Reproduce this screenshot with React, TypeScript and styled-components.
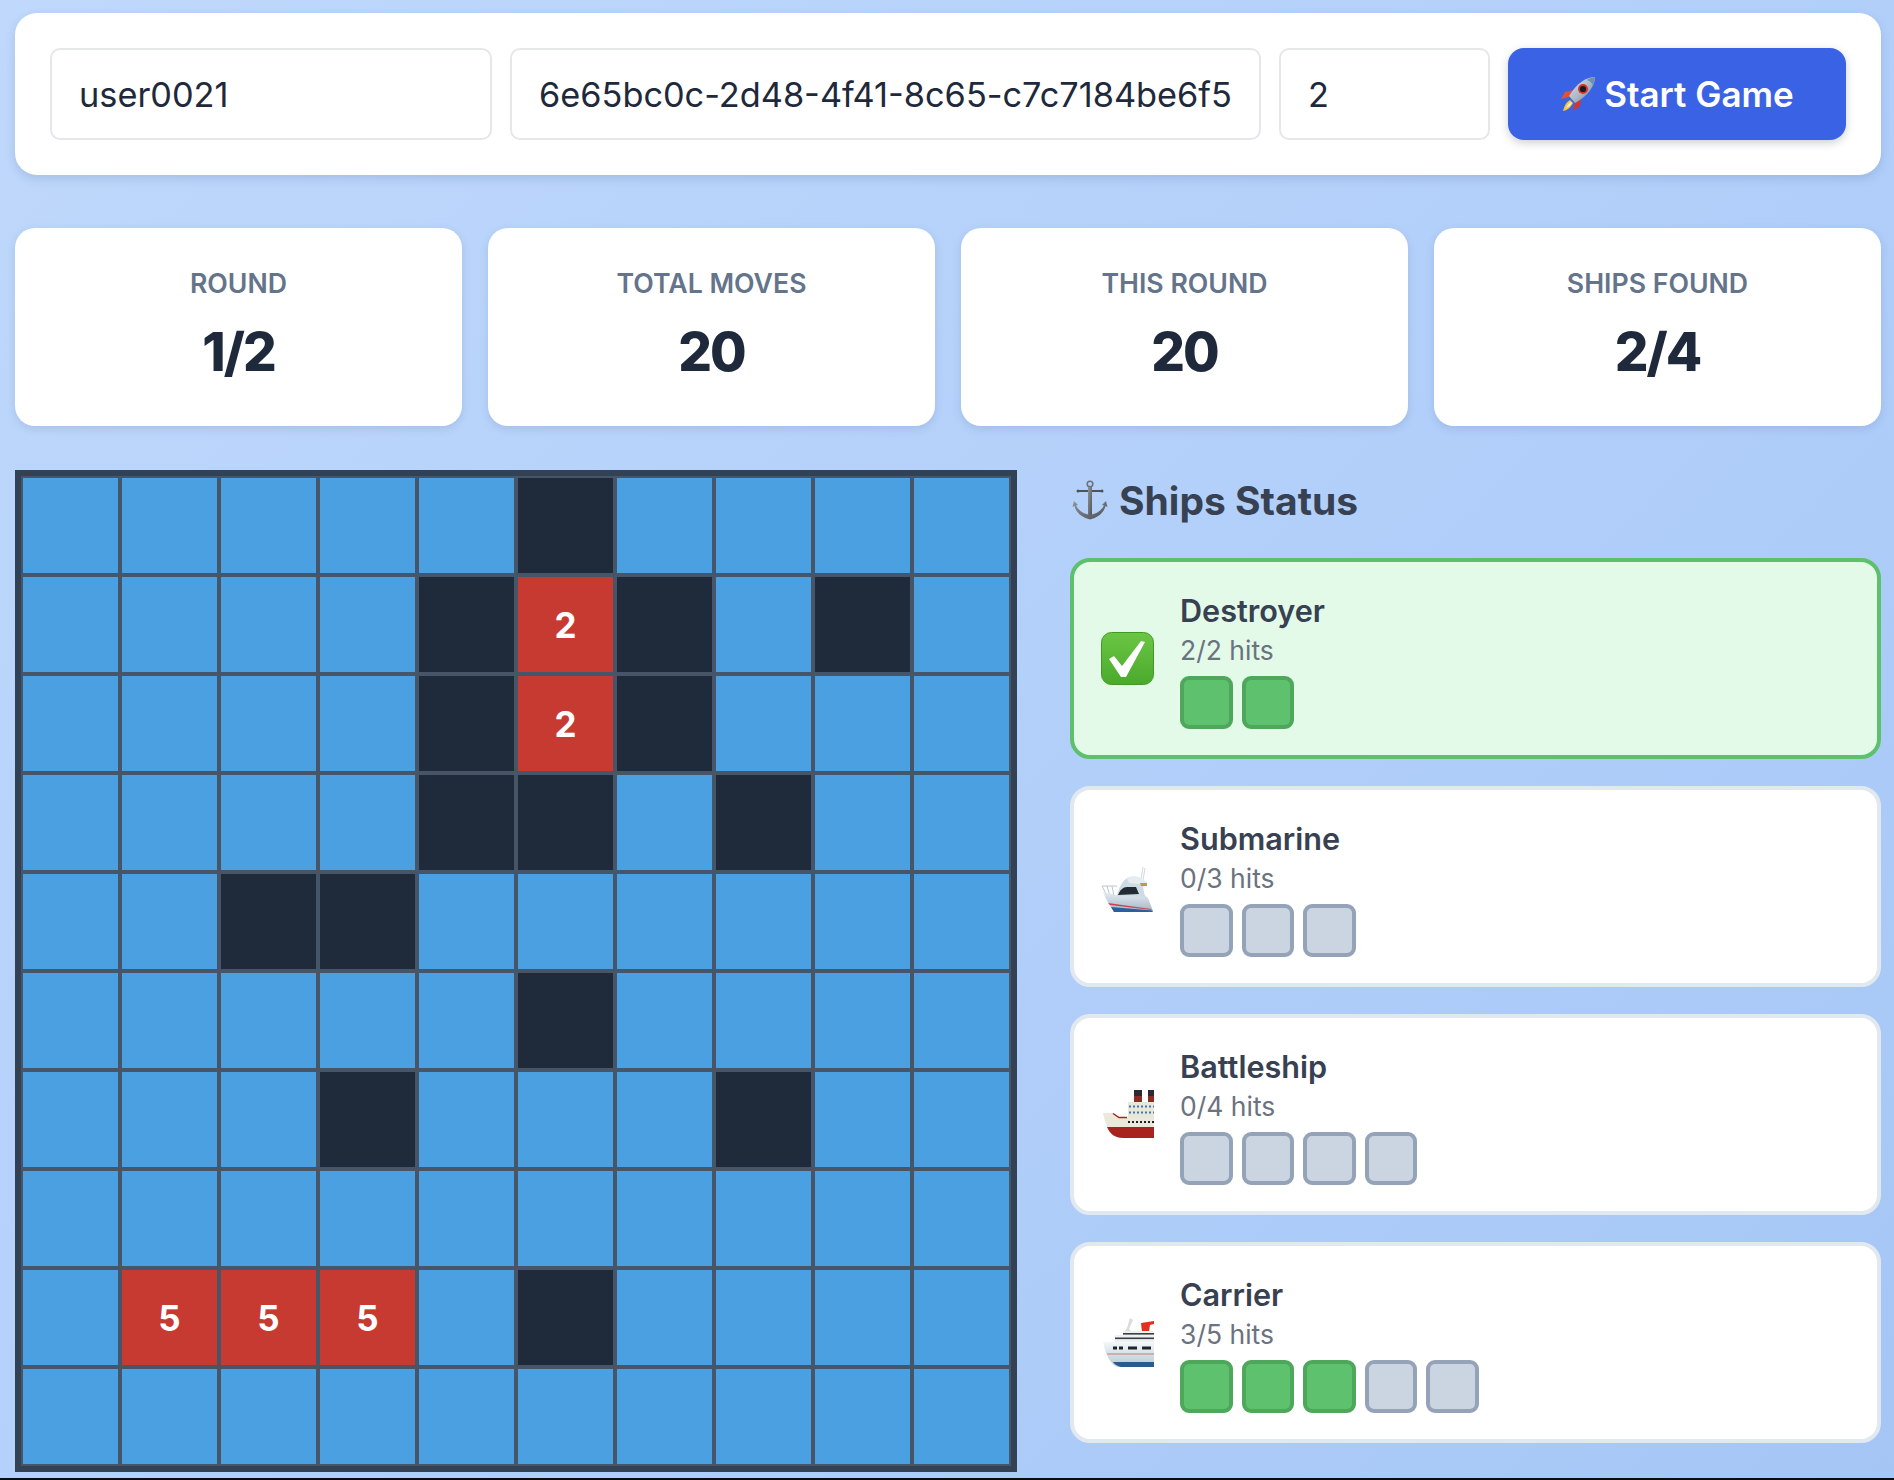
import React from "react";
import styled, { createGlobalStyle } from "styled-components";

const Global = createGlobalStyle`
  html, body { margin: 0; padding: 0; height: 1480px; overflow: hidden; background: #0b0b14; }
  #root { height: 1480px; }
  * { box-sizing: border-box; }
  body { font-family: Inter, "Liberation Sans", sans-serif; }
`;

const Page = styled.div`
  height: 1478px;
  padding: 13px 13px 0 15px;
  display: flex;
  flex-direction: column;
  gap: 53px;
  background: linear-gradient(135deg, #bfd8fb 0%, #b3d0fa 50%, #a5c6f5 100%);
`;

const ControlCard = styled.div`
  height: 162px;
  padding: 35px 35px;
  display: flex;
  gap: 18px;
  background: #fff;
  border-radius: 22px;
  box-shadow: 0 4px 10px rgba(60, 90, 140, 0.18);
`;

const Field = styled.div<{ $w: number }>`
  width: ${(p) => p.$w}px;
  flex: none;
  height: 92px;
  padding: 0 27px;
  display: flex;
  align-items: center;
  border: 2px solid #e5e7eb;
  border-radius: 10px;
  font-size: 34.3px;
  color: #1e293b;
  white-space: nowrap;
`;

const StartButton = styled.div`
  width: 338px;
  flex: none;
  height: 92px;
  display: flex;
  align-items: center;
  justify-content: center;
  gap: 8px;
  background: #3a62e4;
  border-radius: 16px;
  color: #fff;
  font-size: 35px;
  font-weight: 600;
  box-shadow: 0 3px 8px rgba(30, 41, 59, 0.22);
`;

const StatsRow = styled.div`
  display: grid;
  grid-template-columns: repeat(4, 447px);
  gap: 26px;
`;

const StatCard = styled.div`
  height: 198px;
  display: flex;
  flex-direction: column;
  align-items: center;
  background: #fff;
  border-radius: 20px;
  padding-top: 39px;
  box-shadow: 0 3px 8px rgba(60, 90, 140, 0.16);
`;

const StatLabel = styled.div`
  font-size: 26.7px;
  line-height: 32px;
  font-weight: 600;
  color: #64748b;
`;

const StatValue = styled.div`
  margin-top: 20px;
  font-size: 53px;
  line-height: 66px;
  font-weight: 800;
  letter-spacing: -2px;
  color: #1e293b;
`;

const GameRow = styled.div`
  margin-top: -9px;
  display: flex;
  gap: 53px;
  align-items: flex-start;
`;

const Board = styled.div`
  width: 1002px;
  height: 1002px;
  flex: none;
  padding: 2px;
  display: grid;
  grid-template-columns: repeat(10, 95px);
  grid-template-rows: repeat(10, 95px);
  gap: 4px;
  background: #475569;
  border: 6px solid #334155;
`;

const Cell = styled.div<{ $kind: string }>`
  display: flex;
  align-items: center;
  justify-content: center;
  color: #fff;
  font-size: 35px;
  font-weight: 700;
  background: ${(p) =>
    p.$kind === "." ? "#4ba0e2" : p.$kind === "x" ? "#1f2a3a" : "#c73a31"};
`;

const Side = styled.div`
  width: 811px;
  display: flex;
  flex-direction: column;
`;

const Heading = styled.div`
  height: 88px;
  padding: 7px 0 0 2px;
  display: flex;
  align-items: flex-start;
  gap: 10px;
  font-size: 39px;
  line-height: 48px;
  font-weight: 700;
  color: #374151;
`;

const AnchorSvg = styled.svg`
  width: 37px;
  height: 40px;
  margin-top: 3px;
  flex: none;
`;

const ShipList = styled.div`
  display: flex;
  flex-direction: column;
  gap: 27px;
`;

const ShipCard = styled.div<{ $done?: boolean }>`
  height: 201px;
  padding: 0 27px;
  display: flex;
  align-items: center;
  gap: 26px;
  border: 4px solid ${(p) => (p.$done ? "#5cc06d" : "#e2e8f0")};
  border-radius: 20px;
  background: ${(p) => (p.$done ? "#e3fae8" : "#fff")};
`;

const ShipIcon = styled.svg`
  width: 53px;
  height: 53px;
  flex: none;
`;

const ShipInfo = styled.div`
  padding-top: 4px;
  display: flex;
  flex-direction: column;
`;

const ShipName = styled.div`
  font-size: 30.6px;
  line-height: 38px;
  font-weight: 600;
  color: #374151;
`;

const ShipHits = styled.div`
  margin-top: 3px;
  font-size: 26.5px;
  line-height: 34px;
  color: #6b7280;
`;

const Squares = styled.div`
  margin-top: 9px;
  display: flex;
  gap: 9px;
`;

const Square = styled.div<{ $on: boolean }>`
  width: 52.5px;
  height: 52.5px;
  border-radius: 9px;
  border: 4px solid ${(p) => (p.$on ? "#4fa75b" : "#94a3b8")};
  background: ${(p) => (p.$on ? "#5dc16e" : "#cbd5e1")};
`;

const Rocket = () => (
  <svg width="36" height="36" viewBox="0 0 36 36">
    <defs>
      <linearGradient id="rb" x1="0" y1="0" x2="1" y2="1">
        <stop offset="0" stopColor="#dfe6ee" />
        <stop offset="0.55" stopColor="#a9b6c4" />
        <stop offset="1" stopColor="#5f6c7c" />
      </linearGradient>
    </defs>
    <path d="M13 14 L5 16 L1 23 L9 21Z" fill="#e8502c" />
    <path d="M21 22 L20 30 L13 35 L15 27Z" fill="#d8342a" />
    <path d="M10 24 C6 26 4 31 3 35 C8 34 11 31 13 27Z" fill="#f6c445" />
    <path d="M11 26 C8 28 7 30 6 32 C9 31 11 29 12 27Z" fill="#fff2b0" />
    <path d="M35 1 C26 1 17 7 9 20 L15 27 C28 20 35 10 35 1Z" fill="url(#rb)" />
    <path d="M35 1 C30 2 28 3 27 4 C31 6 32 7 33 10 C34 7 35 4 35 1Z" fill="#6f90b8" />
    <circle cx="23" cy="13" r="5" fill="#d9322b" />
    <circle cx="23" cy="13" r="3.1" fill="#161c26" />
  </svg>
);

const Anchor = () => (
  <AnchorSvg viewBox="0 0 37 40">
    <defs>
      <linearGradient id="an" x1="0" y1="0" x2="1" y2="1">
        <stop offset="0" stopColor="#8f949b" />
        <stop offset="1" stopColor="#4c5158" />
      </linearGradient>
    </defs>
    <circle cx="18" cy="4" r="2.8" fill="none" stroke="#6d7279" strokeWidth="1.6" />
    <rect x="6" y="10" width="24" height="2" rx="1" fill="#4f545b" />
    <circle cx="6" cy="11" r="1.5" fill="#4f545b" />
    <circle cx="30" cy="11" r="1.5" fill="#4f545b" />
    <rect x="16" y="7" width="4" height="31" fill="url(#an)" />
    <path
      d="M2 21 L0.5 27 L2.5 26 C4 33 11 38 18 39.5 C25 38 32 33 33.5 26 L35.5 27 L34 21 L30 25 L32 25.5 C29 31 24 34 18 35 C12 34 7 31 4 25.5 L6 25Z"
      fill="url(#an)"
    />
  </AnchorSvg>
);

const CheckIcon = () => (
  <ShipIcon viewBox="0 0 53 53">
    <defs>
      <linearGradient id="ck" x1="0" y1="0" x2="0" y2="1">
        <stop offset="0" stopColor="#6cc644" />
        <stop offset="1" stopColor="#4aa92c" />
      </linearGradient>
    </defs>
    <rect x="0.5" y="0.5" width="52" height="52" rx="10" fill="url(#ck)" stroke="#3f9a25" />
    <path d="M8 27 L13 24 L21 34 L40 9 L44 10 L25 45 L20 45Z" fill="#fff" />
  </ShipIcon>
);

const YachtIcon = () => (
  <ShipIcon viewBox="0 0 53 53">
    <defs>
      <linearGradient id="yh" x1="0" y1="0" x2="0" y2="1">
        <stop offset="0" stopColor="#eef3f7" />
        <stop offset="1" stopColor="#9fb4c6" />
      </linearGradient>
    </defs>
    <path d="M42 7 L40 20 M44 8 L42 20" stroke="#cdd4da" strokeWidth="0.9" />
    <path d="M1 26 H16 M1 26 L6 36 M6 26 L9 36 M11 26 L13 36" stroke="#b4c0ca" strokeWidth="0.9" fill="none" />
    <path d="M2 32 L20 36 L34 30 L40 32 L47 38 L52 51 L13 52 C9 46 5 40 2 32Z" fill="url(#yh)" />
    <path d="M16 36 C18 26 22 20 28 17 L38 17 L46 24 L42 27 L44 37Z" fill="#cfdbe4" />
    <path d="M17 35 C19 30 22 27 26 27 L35 27 L38 34Z" fill="#222a33" />
    <path d="M26 19 C30 14 38 15 46 22 L46 26 L39 24 L28 23Z" fill="#e6ecf0" />
    <path d="M39 23 L46 23 L46 26 L40 26Z" fill="#bd9a4a" />
    <path d="M7 43 L50 49 L50.5 50 L9 45Z" fill="#c9464c" />
    <path d="M10 47 L51 50.5 L52 52 L13 52Z" fill="#2c5f9e" />
  </ShipIcon>
);

const SteamerIcon = () => (
  <ShipIcon viewBox="0 0 53 53">
    <rect x="33" y="2" width="8" height="6" fill="#2a2a30" />
    <rect x="33" y="8" width="8" height="7" fill="#8f2a22" />
    <rect x="47" y="2" width="6" height="6" fill="#2a2a30" />
    <rect x="47" y="8" width="6" height="7" fill="#8f2a22" />
    <rect x="27" y="14" width="26" height="16" fill="#e9e6da" />
    <path d="M28 18.5 H53 M28 24.5 H53" stroke="#3f78ad" strokeWidth="2" strokeDasharray="2 2" />
    <path d="M2 25 H12 L18 29 L23 30 H53 V50 H22 C12 50 6 44 2 25Z" fill="#ece8dc" />
    <path d="M6 39 H53 V50 H22 C14 50 9 46 6 39Z" fill="#a9231e" />
    <path d="M12 25.5 L18 29.5 H26" stroke="#a9231e" strokeWidth="1.5" fill="none" />
    <path d="M27 34 H53" stroke="#1d1f24" strokeWidth="2" strokeDasharray="2 2" />
  </ShipIcon>
);

const CruiseIcon = () => (
  <ShipIcon viewBox="0 0 53 53">
    <defs>
      <linearGradient id="cr" x1="0" y1="0" x2="0" y2="1">
        <stop offset="0" stopColor="#f5f8f9" />
        <stop offset="1" stopColor="#b4c7d2" />
      </linearGradient>
    </defs>
    <path d="M29 2 L32 4 L28 13 L32 17 H22 L26 12Z" fill="#d9dcdc" />
    <path d="M40 7 L53 5 V8 L49 9 L48 16 H41Z" fill="#e0301e" />
    <rect x="22" y="15" width="31" height="4" fill="#eef1f2" />
    <rect x="22" y="17" width="31" height="1.6" fill="#3a3f45" />
    <rect x="14" y="19" width="39" height="8" fill="#eef1f2" />
    <rect x="14" y="21.5" width="39" height="1.6" fill="#3a3f45" />
    <path d="M2 26 H53 V51 H17 C10 49 5 40 2 26Z" fill="url(#cr)" />
    <path d="M12 32 H16 M18 32 H22 M27 32 H36 M41 32 H50" stroke="#1f2328" strokeWidth="3" />
    <path d="M6 38 H53" stroke="#c97a78" strokeWidth="1" />
    <path d="M12 46 H53 V51 H20 C17 50 14 49 12 46Z" fill="#2b5a8c" />
  </ShipIcon>
);

const boardRows = [
  ".....x....",
  "....x2x.x.",
  "....x2x...",
  "....xx.x..",
  "..xx......",
  ".....x....",
  "...x...x..",
  "..........",
  ".555.x....",
  "..........",
];

const ships = [
  { name: "Destroyer", hits: 2, size: 2, Icon: CheckIcon, done: true },
  { name: "Submarine", hits: 0, size: 3, Icon: YachtIcon },
  { name: "Battleship", hits: 0, size: 4, Icon: SteamerIcon },
  { name: "Carrier", hits: 3, size: 5, Icon: CruiseIcon },
];

const stats = [
  ["ROUND", "1/2"],
  ["TOTAL MOVES", "20"],
  ["THIS ROUND", "20"],
  ["SHIPS FOUND", "2/4"],
];

export default function App() {
  return (
    <Page>
      <Global />
      <ControlCard>
        <Field $w={442}>user0021</Field>
        <Field $w={751}>6e65bc0c-2d48-4f41-8c65-c7c7184be6f5</Field>
        <Field $w={211}>2</Field>
        <StartButton>
          <Rocket />
          Start Game
        </StartButton>
      </ControlCard>
      <StatsRow>
        {stats.map(([l, v]) => (
          <StatCard key={l}>
            <StatLabel>{l}</StatLabel>
            <StatValue>{v}</StatValue>
          </StatCard>
        ))}
      </StatsRow>
      <GameRow>
        <Board>
          {boardRows.flatMap((row, r) =>
            row.split("").map((c, i) => (
              <Cell key={`${r}-${i}`} $kind={c}>
                {c === "2" || c === "5" ? c : null}
              </Cell>
            ))
          )}
        </Board>
        <Side>
          <Heading>
            <Anchor />
            Ships Status
          </Heading>
          <ShipList>
            {ships.map(({ name, hits, size, Icon, done }) => (
              <ShipCard key={name} $done={done}>
                <Icon />
                <ShipInfo>
                  <ShipName>{name}</ShipName>
                  <ShipHits>
                    {hits}/{size} hits
                  </ShipHits>
                  <Squares>
                    {Array.from({ length: size }, (_, i) => (
                      <Square key={i} $on={i < hits} />
                    ))}
                  </Squares>
                </ShipInfo>
              </ShipCard>
            ))}
          </ShipList>
        </Side>
      </GameRow>
    </Page>
  );
}
